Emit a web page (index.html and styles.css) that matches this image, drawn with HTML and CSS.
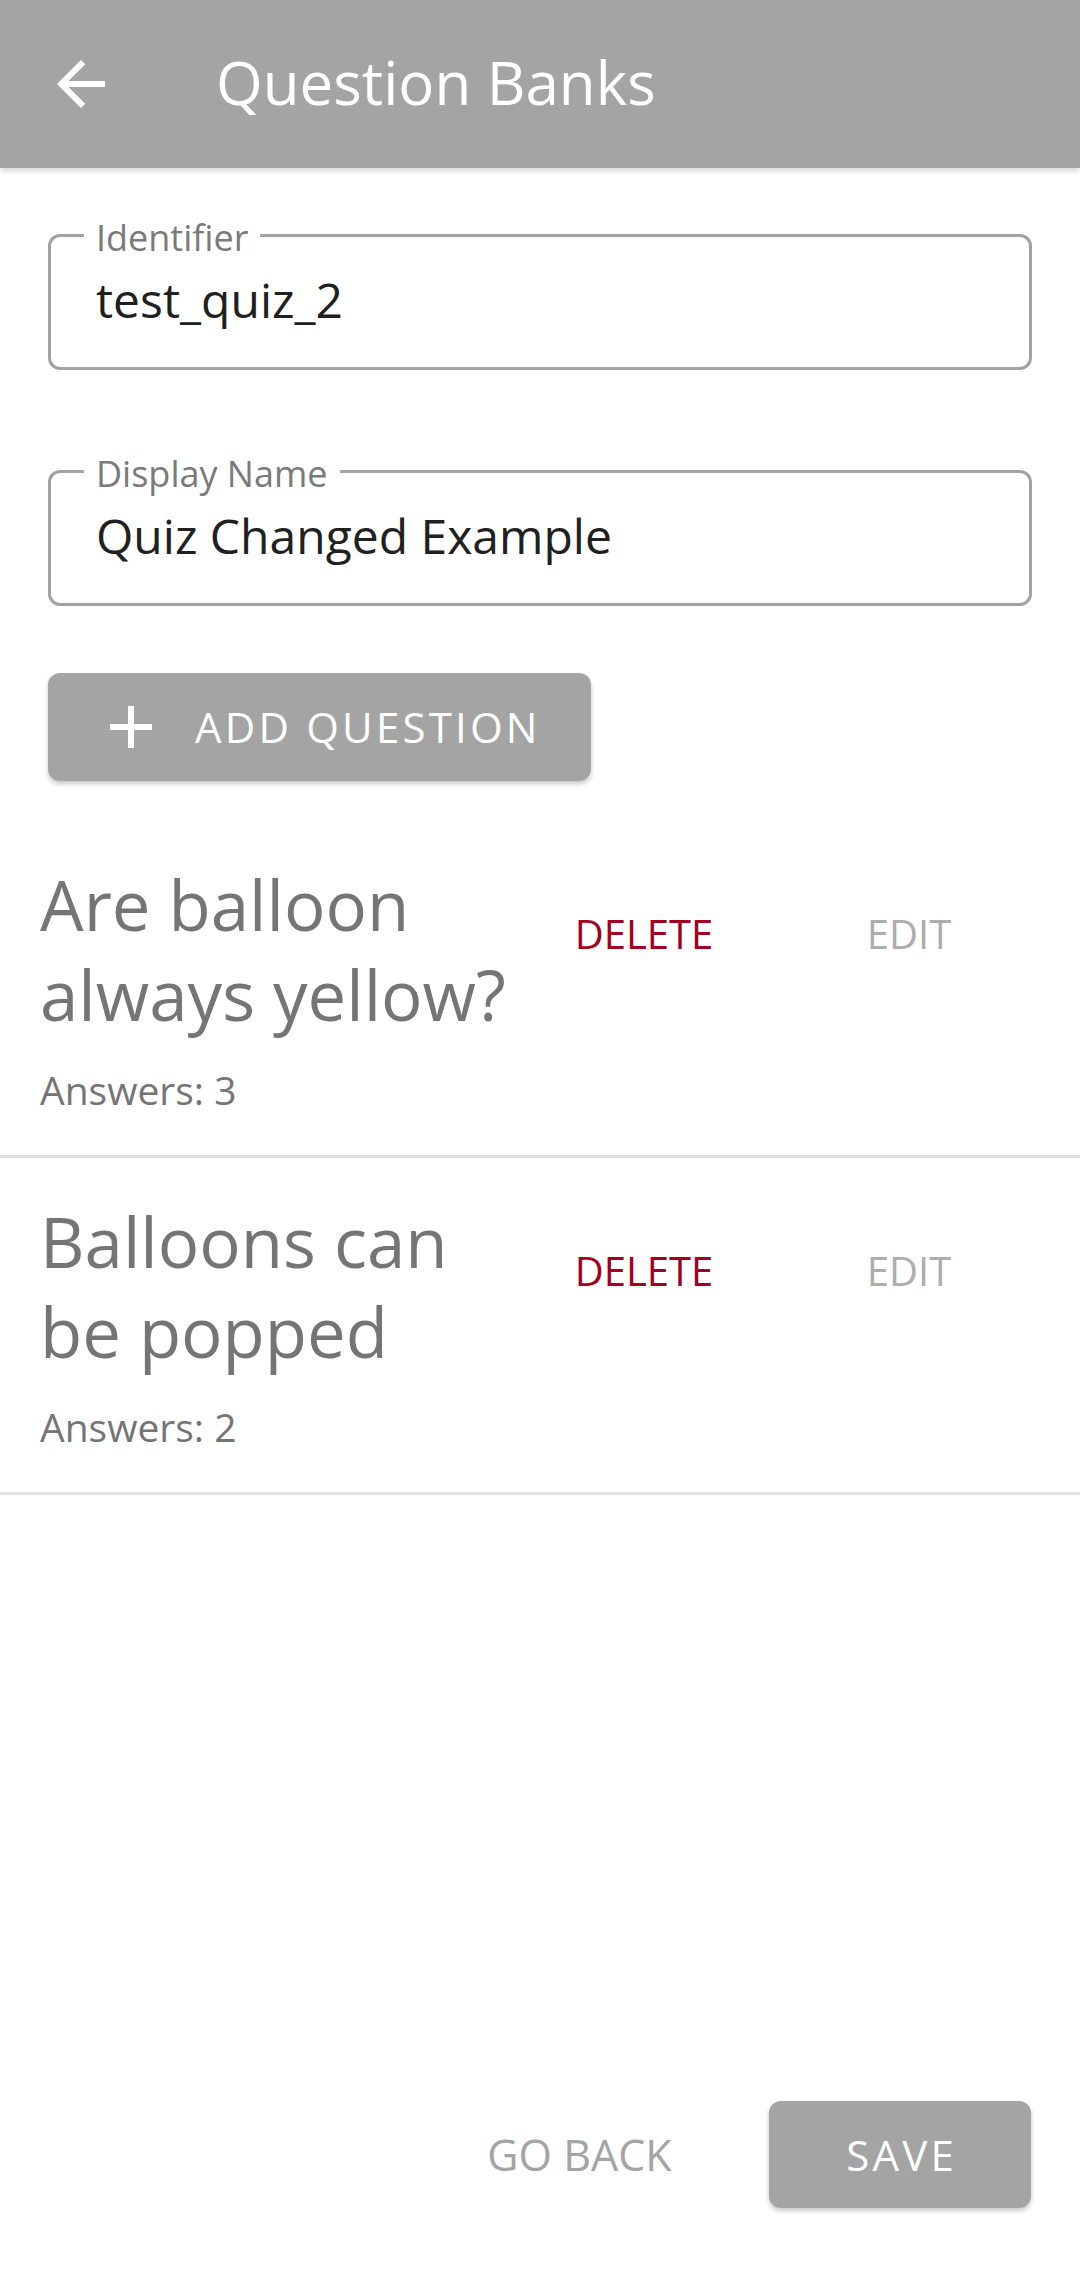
FILE: index.html
```html
<!DOCTYPE html>
<html>
<head>
<meta charset="utf-8">
<title>Question Banks</title>
<link rel="stylesheet" href="styles.css">
</head>
<body>
<div class="page">
  <header class="appbar">
    <button class="back" aria-label="Back">
      <svg viewBox="0 0 24 24" width="72" height="72"><path fill="#ffffff" d="M20 11H7.83l5.59-5.59L12 4l-8 8 8 8 1.41-1.41L7.830 13H20v-2z"/></svg>
    </button>
    <h1 class="title">Question Banks</h1>
  </header>

  <main class="content">
    <div class="field field-first">
      <span class="field-label">Identifier</span>
      <div class="field-value">test_quiz_2</div>
    </div>
    <div class="field field-second">
      <span class="field-label">Display Name</span>
      <div class="field-value">Quiz Changed Example</div>
    </div>

    <button class="add-btn">
      <svg class="plus" viewBox="0 0 42 42" width="42" height="42"><rect x="18" y="0" width="6" height="42" fill="#ffffff"/><rect x="0" y="18" width="42" height="6" fill="#ffffff"/></svg>
      <span class="add-text">ADD QUESTION</span>
    </button>

    <ul class="questions">
      <li class="question">
        <div class="q-info">
          <div class="q-title">Are balloon always yellow?</div>
          <div class="q-answers">Answers: 3</div>
        </div>
        <div class="q-actions">
          <button class="txt-btn delete">DELETE</button>
          <button class="txt-btn edit">EDIT</button>
        </div>
      </li>
      <li class="question">
        <div class="q-info">
          <div class="q-title">Balloons can be popped</div>
          <div class="q-answers">Answers: 2</div>
        </div>
        <div class="q-actions">
          <button class="txt-btn delete">DELETE</button>
          <button class="txt-btn edit">EDIT</button>
        </div>
      </li>
    </ul>
  </main>

  <footer class="footer">
    <button class="goback">GO BACK</button>
    <button class="save">SAVE</button>
  </footer>
</div>
</body>
</html>
```
FILE: styles.css
```css
* { box-sizing: border-box; }
html, body { margin: 0; padding: 0; background: #ffffff; }
body { font-family: "Open Sans", "Noto Sans", sans-serif; }
button { font-family: inherit; border: 0; background: none; margin: 0; padding: 0; cursor: pointer; }

.page {
  min-height: 2275px;
  display: flex;
  flex-direction: column;
}

.appbar {
  height: 168px;
  background: #a4a4a4;
  display: flex;
  align-items: center;
  box-shadow: 0 3px 6px rgba(0, 0, 0, 0.16);
  position: relative;
  z-index: 1;
}
.back {
  width: 72px;
  height: 72px;
  margin-left: 45px;
  display: flex;
}
.title {
  margin: 0 0 0 99px;
  padding-bottom: 4px;
  font-weight: 400;
  font-size: 60px;
  line-height: 60px;
  color: #ffffff;
}

.content {
  flex: 1;
  padding-top: 66px;
}

.field {
  position: relative;
  margin: 0 48px;
  height: 136px;
  border: 3px solid #a2a2a2;
  border-radius: 12px;
  padding: 39px 45px 0 45px;
}
.field-second { margin-top: 100px; }
.field-label {
  position: absolute;
  top: -17px;
  left: 33px;
  padding: 0 12px;
  background: #ffffff;
  font-size: 36px;
  line-height: 36px;
  color: #7a7a7a;
}
.field-value {
  font-size: 48px;
  line-height: 48px;
  color: #202020;
  white-space: nowrap;
}

.add-btn {
  margin: 67px 0 0 48px;
  height: 108px;
  display: flex;
  align-items: center;
  padding: 0 50px 0 62px;
  background: #a4a4a4;
  border-radius: 12px;
  box-shadow: 0 3px 5px rgba(0, 0, 0, 0.22);
  color: #ffffff;
}
.plus { flex: none; }
.add-text {
  margin-left: 43px;
  font-size: 42px;
  line-height: 42px;
  letter-spacing: 3.2px;
}

.questions {
  list-style: none;
  margin: 40px 0 0 0;
  padding: 0;
}
.question {
  display: flex;
  align-items: flex-start;
  padding: 38px 75px 41px 40px;
  border-bottom: 3px solid #e0e0e0;
}
.q-info {
  flex: 1;
  min-width: 0;
  margin-right: 24px;
}
.q-title {
  width: 480px;
  font-size: 69px;
  line-height: 90px;
  color: #757575;
}
.q-answers {
  margin-top: 27px;
  font-size: 39px;
  line-height: 48px;
  color: #757575;
}
.q-actions {
  display: flex;
  gap: 73px;
  margin-top: 3px;
}
.txt-btn {
  width: 192px;
  height: 144px;
  font-size: 40px;
  line-height: 40px;
  text-align: center;
}
.delete { color: #a3001e; }
.edit { color: #adadad; }

.footer {
  display: flex;
  justify-content: flex-end;
  align-items: center;
  padding: 0 49px 67px 0;
}
.goback {
  width: 233px;
  height: 108px;
  margin-right: 73px;
  font-size: 43px;
  color: #a4a4a4;
  text-align: center;
}
.save {
  width: 262px;
  height: 107px;
  background: #a4a4a4;
  border-radius: 12px;
  box-shadow: 0 3px 5px rgba(0, 0, 0, 0.22);
  color: #ffffff;
  font-size: 42px;
  letter-spacing: 3.2px;
  text-indent: 3.2px;
}
```
